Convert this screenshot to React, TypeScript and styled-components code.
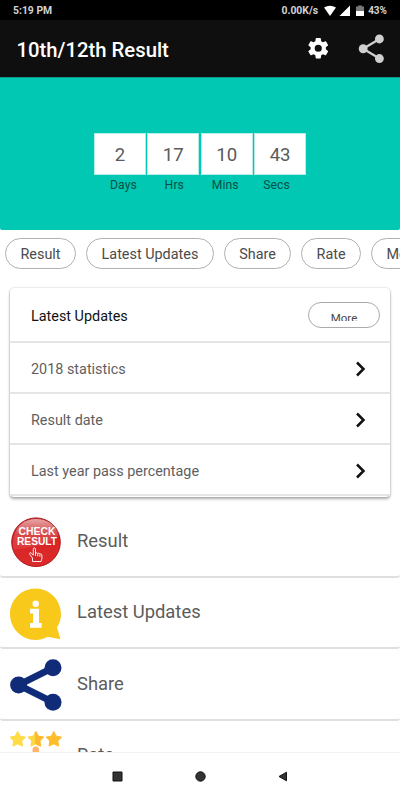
import React from "react";
import styled, { createGlobalStyle } from "styled-components";

const GlobalStyle = createGlobalStyle`
  * { box-sizing: border-box; }
  body { margin: 0; background: #fff; overflow: hidden; }
  svg { display: block; flex: none; }
`;

const Screen = styled.div`
  width: 400px;
  height: 800px;
  overflow: hidden;
  display: flex;
  flex-direction: column;
  background: #fff;
  font-family: Roboto, "Liberation Sans", sans-serif;
`;

const StatusBar = styled.div`
  height: 20px;
  flex: none;
  display: flex;
  align-items: center;
  padding: 1px 13px 0;
  background: #000;
  color: #d2d2d2;
  font-size: 10.4px;
  font-weight: 700;
`;

const StatusIcons = styled.div`
  display: flex;
  align-items: center;
  margin-left: auto;
`;

const StatusText = styled.span<{ $gap?: number; $size: number }>`
  font-size: ${(p) => p.$size}px;
  margin-right: ${(p) => p.$gap ?? 0}px;
`;

const AppBar = styled.header`
  height: 57px;
  flex: none;
  display: flex;
  align-items: center;
  padding: 0 15.5px 0 16.5px;
  background: #0f0f0f;
`;

const Title = styled.h1`
  margin: 0 auto 0 0;
  padding-top: 3px;
  color: #fff;
  font-size: 20.3px;
  font-weight: 500;
  line-height: 24px;
`;

const IconButton = styled.button<{ $gap?: number }>`
  padding: 0;
  border: 0;
  background: none;
  margin-left: ${(p) => p.$gap ?? 0}px;
`;

const Banner = styled.section`
  height: 153px;
  flex: none;
  display: flex;
  justify-content: center;
  gap: 1.6px;
  padding-top: 55px;
  background: #00c8b3;
  border-top: 1px solid #0a9a8c;
  border-radius: 0 0 2px 2px;
`;

const Unit = styled.div`
  width: 51.8px;
  display: flex;
  flex-direction: column;
  align-items: center;
`;

const UnitValue = styled.div`
  width: 100%;
  height: 42px;
  border: 1px solid #b5eee7;
  background: #fff;
  color: #5b5b5b;
  font-size: 18.6px;
  line-height: 42px;
  text-align: center;
`;

const UnitLabel = styled.div<{ $shift: number }>`
  margin: 2px 0 0 ${(p) => p.$shift}px;
  color: #064f47;
  font-size: 12.2px;
  line-height: 16px;
  letter-spacing: 0.1px;
`;

const Chips = styled.nav`
  height: 58px;
  flex: none;
  display: flex;
  gap: 10.2px;
  padding: 8px 0 0 5px;
`;

const Chip = styled.button<{ $width: number }>`
  width: ${(p) => p.$width}px;
  height: 31px;
  flex: none;
  padding: 2px 0 0;
  border: 1px solid #b1b1b1;
  border-radius: 16px;
  background: #fff;
  color: #4b4b4b;
  font: 400 14.4px/27px Roboto, sans-serif;
`;

const Card = styled.section`
  height: 209px;
  flex: none;
  margin: 0 10px;
  border-radius: 4px;
  background: #fff;
  box-shadow: 0 2px 3px rgba(0, 0, 0, 0.32), 0 0 2px rgba(0, 0, 0, 0.22);
`;

const CardRow = styled.div<{ $head?: boolean }>`
  height: ${(p) => (p.$head ? 55 : 51.1)}px;
  display: flex;
  align-items: center;
  justify-content: space-between;
  padding: ${(p) => (p.$head ? "1px 10px 0 21px" : "2px 20px 0 21px")};
  border-bottom: 2px solid #e5e5e5;
  color: ${(p) => (p.$head ? "#111" : "#5f5f5f")};
  font-size: 14.4px;
`;

const RowLabel = styled.span`
  padding-top: 2px;
`;

const MoreButton = styled.button`
  width: 72px;
  height: 26px;
  padding: 6px 0 0;
  border: 1px solid #aaa;
  border-radius: 13px;
  background: #fff;
`;

const MoreText = styled.span`
  display: block;
  height: 12px;
  margin-bottom: 6px;
  overflow: hidden;
  color: #484848;
  font: 400 11.5px/18px Roboto, sans-serif;
`;

const Menu = styled.main`
  flex: 1;
  min-height: 0;
  overflow: hidden;
  padding-top: 9px;
`;

const MenuRow = styled.div`
  height: 71.5px;
  display: flex;
  align-items: center;
  gap: 15px;
  padding: 0 0 0 10px;
  border-bottom: 2px solid #dfdfdf;
  border-radius: 3px;
  color: #5c5c5c;
  font-size: 18.4px;
`;

const MenuIcon = styled.div`
  width: 52px;
  flex: none;
  margin-top: 3px;
`;

const MenuLabel = styled.span`
  padding-bottom: 1px;
`;

const NavBar = styled.footer`
  height: 48px;
  flex: none;
  display: flex;
  align-items: center;
  justify-content: space-between;
  padding: 0 112px;
  border-top: 1px solid #f3f3f3;
  background: #fff;
`;

const units = [
  { value: "2", label: "Days", shift: 7 },
  { value: "17", label: "Hrs", shift: 2 },
  { value: "10", label: "Mins", shift: -3 },
  { value: "43", label: "Secs", shift: -7 },
];

const chips = [
  { label: "Result", width: 71 },
  { label: "Latest Updates", width: 127.5 },
  { label: "Share", width: 67.3 },
  { label: "Rate", width: 59.5 },
  { label: "More", width: 64 },
];

const updates = ["2018 statistics", "Result date", "Last year pass percentage"];

interface ShareIconProps {
  size: number;
  color: string;
  dot: number;
  line: number;
  left: number;
}

function ShareIcon({ size, color, dot, line, left }: ShareIconProps) {
  return (
    <svg width={size} height={size} viewBox="0 0 52 52" fill={color} stroke="none">
      <path d={`M43 8.800 ${left} 26 43 43.200`} fill="none" stroke={color} strokeWidth={line} />
      <circle cx={left} cy="26" r={dot} />
      <circle cx="43" cy="8.800" r={dot} />
      <circle cx="43" cy="43.200" r={dot} />
    </svg>
  );
}

function CheckResultIcon() {
  return (
    <svg width="51" height="52" viewBox="0 0 51 52">
      <defs>
        <linearGradient id="badge" x1="0" y1="0" x2="0" y2="1">
          <stop offset="0" stopColor="#c01e20" />
          <stop offset="0.5" stopColor="#d92526" />
          <stop offset="1" stopColor="#dc2a2b" />
        </linearGradient>
        <linearGradient id="gloss" x1="0" y1="0" x2="0" y2="1">
          <stop offset="0" stopColor="#fff" stopOpacity="0.6" />
          <stop offset="0.5" stopColor="#fff" stopOpacity="0.16" />
          <stop offset="1" stopColor="#fff" stopOpacity="0.08" />
        </linearGradient>
      </defs>
      <circle cx="26" cy="26.200" r="24.300" fill="url(#badge)" stroke="#ad1d20" />
      <path d="M3.500 22C6 9 15 3 26 3S46 9 48.500 19C40 28 29 30 3.500 34Q2.500 28 3.500 22Z" fill="url(#gloss)" />
      <g fill="#fff" fontFamily="Liberation Sans, sans-serif" fontWeight="700" fontSize="10.300" textAnchor="middle">
        <text x="27" y="19.200" textLength="37" lengthAdjust="spacingAndGlyphs">CHECK</text>
        <text x="27" y="29.200" textLength="40" lengthAdjust="spacingAndGlyphs">RESULT</text>
      </g>
      <path
        d="M22.500 45.500v-3.500l-2.700-3.700c-.8-1.500.7-2.200 1.600-1.100l1.900 2v-6c0-1.800 2.200-1.800 2.200 0v4.200c.6-.9 2-.7 2.200.3.7-.8 2-.5 2.200.5.9-.6 2-.1 2 .9v3.100c0 1.400-.6 2.100-.9 3.300ZM25.500 37v3M27.700 38v2.300M29.900 38.500v2.300"
        fill="#cf292b" stroke="#fff" strokeWidth="0.9" strokeLinejoin="round"
      />
    </svg>
  );
}

function InfoIcon() {
  return (
    <svg width="51" height="52" viewBox="0 0 51 52">
      <path d="M25.500.4C39.500.4 51 12 51 26c0 5-1.500 9.700-4 13.600L50.500 51.300 37.500 48.800C33.800 50.900 29.800 52 25.500 52 11.500 52 0 40.200 0 26S11.500.4 25.500.4Z" fill="#f8c81b" />
      <circle cx="25.700" cy="15.700" r="3.200" fill="#fff" />
      <path d="M20 20.800h9V35h2.700v4.800H20V35h3v-9.500h-3Z" fill="#fff" />
    </svg>
  );
}

const star = "M7.500 0 10 4.700 15.200 5.600 11.500 9.400 12.300 14.600 7.500 12.300 2.700 14.600 3.500 9.400-.2 5.600 5 4.700Z";

function RateIcon() {
  return (
    <svg width="52" height="52" viewBox="0 0 52 52">
      <g strokeWidth="1" strokeLinejoin="round">
        <path d={star} transform="translate(.2 .5)" fill="#ffdb44" stroke="#ffdb44" />
        <g transform="translate(18.200 .5)">
          <path d={star} fill="#ffd742" stroke="#ffd742" />
          <path d="M7.500 0 10 4.700 15.200 5.600 11.500 9.400 12.300 14.600 7.500 12.300Z" fill="#ffb82b" stroke="#ffb82b" />
        </g>
        <path d={star} transform="translate(36.300 .5)" fill="#ffbd29" stroke="#ffbd29" />
      </g>
      <rect x="22.500" y="15.500" width="6.500" height="23" rx="3.200" fill="#ffb36b" />
      <path d="M16 30h20v11q0 10-10 10T16 41Z" fill="#ffb36b" />
    </svg>
  );
}

const menu = [
  { label: "Result", icon: <CheckResultIcon /> },
  { label: "Latest Updates", icon: <InfoIcon /> },
  { label: "Share", icon: <ShareIcon size={52} color="#102b78" dot={8.5} line={6.8} left={8.6} /> },
  { label: "Rate", icon: <RateIcon /> },
];

export default function App() {
  return (
    <>
      <GlobalStyle />
      <Screen>
        <StatusBar>
          <span>5:19 PM</span>
          <StatusIcons>
            <StatusText $size={10.4} $gap={6}>0.00K/s</StatusText>
            <svg width="44" height="12" viewBox="0 0 44 12">
              <path d="M0 2.500Q6-1 12 2.500L6 11Z" fill="#fff" />
              <path d="M15.500 11 26 .5V11Z" fill="#fff" />
              <path d="M34 .5h4v1h2v4.500h-8V1.500h2Z" fill="#777" />
              <path d="M32 6h8v5h-8Z" fill="#fff" />
            </svg>
            <StatusText $size={10}>43%</StatusText>
          </StatusIcons>
        </StatusBar>
        <AppBar>
          <Title>10th/12th Result</Title>
          <IconButton aria-label="Settings">
            <svg width="24.500" height="24.500" viewBox="0 0 24 24" fill="#fff">
              <path d="M19.430 12.980c.04-.32.070-.64.070-.98s-.03-.66-.07-.98l2.110-1.650a.5.5 0 0 0 .12-.64l-2-3.460a.5.5 0 0 0-.61-.22l-2.490 1c-.52-.4-1.080-.73-1.690-.98l-.38-2.650A.49.49 0 0 0 14 2h-4a.49.49 0 0 0-.49.420l-.38 2.650c-.61.250-1.170.590-1.690.980l-2.490-1a.5.5 0 0 0-.61.220l-2 3.460a.49.49 0 0 0 .12.640l2.110 1.650c-.04.320-.07.650-.07.980s.03.660.07.980l-2.110 1.650a.5.5 0 0 0-.12.640l2 3.460c.12.220.39.3.61.220l2.490-1c.52.4 1.080.730 1.690.980l.38 2.650c.03.240.240.420.490.420h4c.25 0 .46-.18.490-.42l.38-2.650c.61-.25 1.170-.59 1.690-.98l2.490 1c.23.090.49 0 .61-.22l2-3.460a.5.5 0 0 0-.12-.64ZM12 15.500a3.500 3.500 0 1 1 0-7 3.500 3.500 0 0 1 0 7Z" />
            </svg>
          </IconButton>
          <IconButton $gap={24.5} aria-label="Share">
            <ShareIcon size={29.5} color="#cfcfcf" dot={7.8} line={4} left={14.4} />
          </IconButton>
        </AppBar>
        <Banner>
          {units.map((u) => (
            <Unit key={u.label}>
              <UnitValue>{u.value}</UnitValue>
              <UnitLabel $shift={u.shift}>{u.label}</UnitLabel>
            </Unit>
          ))}
        </Banner>
        <Chips>
          {chips.map((c) => (
            <Chip key={c.label} $width={c.width}>{c.label}</Chip>
          ))}
        </Chips>
        <Card>
          <CardRow $head>
            <RowLabel>Latest Updates</RowLabel>
            <MoreButton><MoreText>More</MoreText></MoreButton>
          </CardRow>
          {updates.map((text) => (
            <CardRow key={text}>
              <RowLabel>{text}</RowLabel>
              <svg width="18" height="16" viewBox="0 0 18 16" fill="none" stroke="#111" strokeWidth="2.500">
                <path d="m5 1.500 6.500 6.500L5 14.500" />
              </svg>
            </CardRow>
          ))}
        </Card>
        <Menu>
          {menu.map((m) => (
            <MenuRow key={m.label}>
              <MenuIcon>{m.icon}</MenuIcon>
              <MenuLabel>{m.label}</MenuLabel>
            </MenuRow>
          ))}
        </Menu>
        <NavBar>
          <svg width="11" height="11" viewBox="0 0 11 11"><path d="M1 1h9v9H1Z" fill="#333" stroke="#111" /></svg>
          <svg width="11" height="11" viewBox="0 0 11 11"><circle cx="5.500" cy="5.500" r="4.700" fill="#333" stroke="#111" /></svg>
          <svg width="10" height="11" viewBox="0 0 10 11"><path d="M1 5.500 8.500 1.200V9.800Z" fill="#333" stroke="#111" /></svg>
        </NavBar>
      </Screen>
    </>
  );
}
